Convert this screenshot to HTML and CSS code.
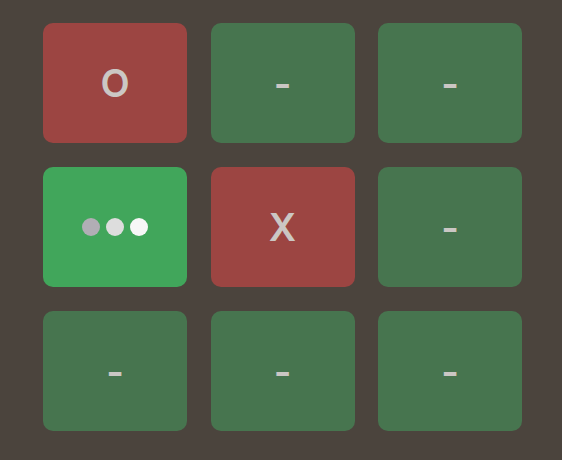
FILE: index.html
```html
<!DOCTYPE html>
<html>
<head>
<meta charset="utf-8">
<link rel="stylesheet" href="styles.css">
</head>
<body>
<div class="board">
  <div class="cell red"><span class="mark">O</span></div>
  <div class="cell green"><span class="mark dash">-</span></div>
  <div class="cell green"><span class="mark dash">-</span></div>
  <div class="cell active">
    <div class="dots"><span class="dot d1"></span><span class="dot d2"></span><span class="dot d3"></span></div>
  </div>
  <div class="cell red"><span class="mark">X</span></div>
  <div class="cell green"><span class="mark dash">-</span></div>
  <div class="cell green"><span class="mark dash">-</span></div>
  <div class="cell green"><span class="mark dash">-</span></div>
  <div class="cell green"><span class="mark dash">-</span></div>
</div>
</body>
</html>
```
FILE: styles.css
```css
html, body {
  margin: 0;
  padding: 0;
  background: #4b443d;
  width: 562px;
  height: 460px;
  overflow: hidden;
}
.board {
  display: grid;
  grid-template-columns: repeat(3, 144px);
  grid-template-rows: repeat(3, 120px);
  column-gap: 23.5px;
  row-gap: 24px;
  padding: 23px 0 0 43px;
}
.cell {
  border-radius: 10px;
  display: flex;
  align-items: center;
  justify-content: center;
}
.red { background: #9c4542; }
.green { background: #47754f; }
.active { background: #41a65b; }
.mark {
  font-family: Inter, "Liberation Sans", Arial, sans-serif;
  font-weight: 600;
  font-size: 38px;
  color: #cbc7c4;
  line-height: 1;
}
.dash { position: relative; top: 1px; }
.dots {
  display: flex;
  gap: 6px;
}
.dot {
  width: 18px;
  height: 18px;
  border-radius: 50%;
}
.d1 { background: #b1aeb5; }
.d2 { background: #dddddd; }
.d3 { background: #f7f7f7; }
```
